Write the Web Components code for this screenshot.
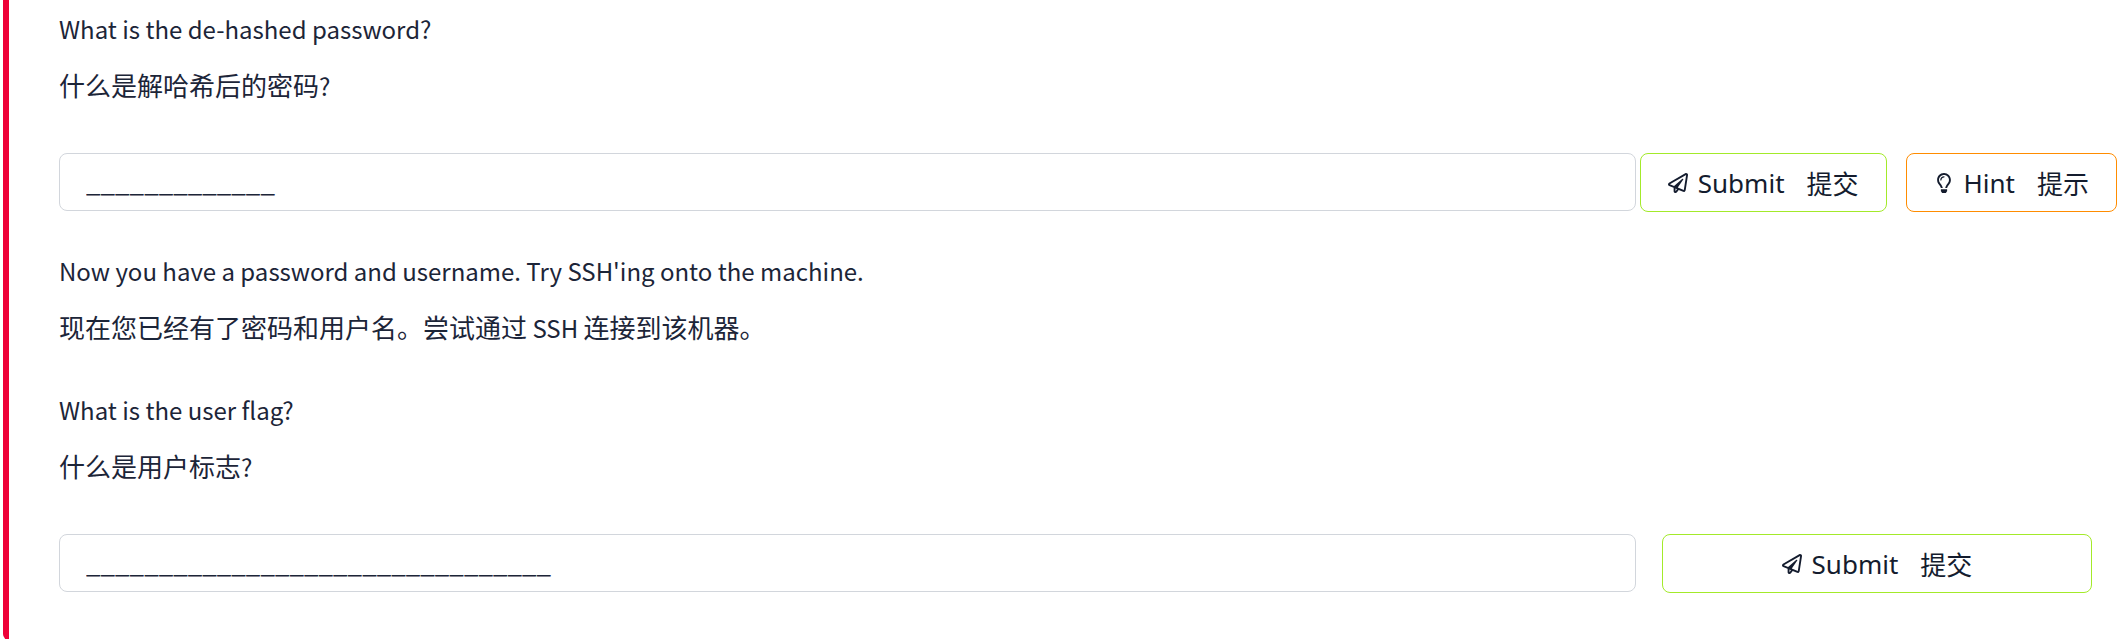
<!DOCTYPE html>
<html lang="en">
<head>
<meta charset="utf-8">
<meta name="viewport" content="width=device-width, initial-scale=1">
<title>Room questions</title>
<style>
  body { margin: 0; background: #fff; color: #1c2538; font-family: "Noto Sans CJK SC", "Noto Sans", sans-serif; }
  small { font-size: 24px; }
</style>
</head>
<body>
<task-card>
  <bilingual-text>
    What is the de-hashed password?
    <span slot="zh" lang="zh-CN">什么是解哈希后的密码<small>?</small></span>
  </bilingual-text>
  <answer-row wide length="13" label="What is the de-hashed password?">
    <action-button kind="submit">Submit<span slot="zh" lang="zh-CN">提交</span></action-button>
    <action-button kind="hint">Hint<span slot="zh" lang="zh-CN">提示</span></action-button>
  </answer-row>
  <bilingual-text>
    Now you have a password and username. Try SSH'ing onto the machine.
    <span slot="zh" lang="zh-CN">现在您已经有了密码和用户名。尝试通过<small> SSH </small>连接到该机器。</span>
  </bilingual-text>
  <bilingual-text>
    What is the user flag?
    <span slot="zh" lang="zh-CN">什么是用户标志<small>?</small></span>
  </bilingual-text>
  <answer-row length="32" label="What is the user flag?">
    <action-button kind="submit">Submit<span slot="zh" lang="zh-CN">提交</span></action-button>
  </answer-row>
</task-card>

<script>
class TaskCard extends HTMLElement {
  constructor() {
    super();
    this.attachShadow({ mode: 'open' }).innerHTML = `
      <style>
        :host { display: block; margin-left: 3px; border-left: 6px solid #ee0038; border-bottom-left-radius: 6px; }
        section { padding: 1px 36px 16px 50px; }
      </style>
      <section><slot></slot></section>`;
  }
}

class BilingualText extends HTMLElement {
  constructor() {
    super();
    this.attachShadow({ mode: 'open' }).innerHTML = `
      <style>
        :host { display: block; padding-bottom: 26px; }
        p { margin: 0; line-height: 56px; }
        .en { font-size: 24px; }
        .zh { font-size: 26px; }
        ::slotted(span) { display: block; }
      </style>
      <p class="en"><slot></slot></p>
      <p class="zh"><slot name="zh"></slot></p>`;
  }
}

class AnswerRow extends HTMLElement {
  constructor() {
    super();
    this.attachShadow({ mode: 'open' }).innerHTML = `
      <style>
        :host { display: block; padding: 13px 0 31px; }
        form { display: grid; grid-template-columns: 11fr 3fr; column-gap: 26px; align-items: start; margin: 0; }
        input { box-sizing: border-box; width: 100%; height: 58px; margin: 0; padding: 0 26px 4px; border: 1px solid #d2d6dc;
          border-radius: 8px; background: #fff; color: inherit; font: 26px "Noto Sans CJK SC", sans-serif; outline: none; }
        input::placeholder { color: #1c2538; opacity: 1; }
        .actions { display: grid; }
        :host([wide]) .actions { display: flex; justify-content: flex-end; gap: 19px; margin: 0 -25px; }
      </style>
      <form>
        <input type="text" autocomplete="off">
        <div class="actions"><slot></slot></div>
      </form>`;
  }
  connectedCallback() {
    const input = this.shadowRoot.querySelector('input');
    input.placeholder = '_'.repeat(Number(this.getAttribute('length')));
    input.setAttribute('aria-label', this.getAttribute('label'));
    this.shadowRoot.querySelector('form').addEventListener('submit', e => e.preventDefault());
  }
}

const ICONS = {
  submit: `<svg width="20" height="20" viewBox="0 0 512 512" fill="currentColor" aria-hidden="true">
      <path d="M440 6.5L24 246.4c-34.4 19.9-31.1 70.8 5.7 85.9L144 379.6V464c0 46.4 59.2 65.5 86.6 28.6l43.8-59.1 111.9 46.2c5.9 2.4 12.1 3.6 18.3 3.6 8.2 0 16.3-2.1 23.6-6.2 12.8-7.2 21.6-20 23.9-34.5l59.4-387.2c6.1-40.1-36.9-68.8-71.5-48.9zM192 464v-64.6l36.6 15.1L192 464zm212.6-28.7l-153.8-63.5L391 169.5c10.7-15.5-9.5-33.5-23.7-21.2L155.8 332.6 48 288 464 48l-59.4 387.3z"/></svg>`,
  hint: `<svg width="20" height="20" viewBox="0 0 352 512" fill="currentColor" aria-hidden="true">
      <path d="M176 80c-52.94 0-96 43.06-96 96 0 8.84 7.16 16 16 16s16-7.16 16-16c0-35.3 28.72-64 64-64 8.84 0 16-7.16 16-16s-7.16-16-16-16zM96.06 459.17c0 3.15.93 6.22 2.68 8.84l24.51 36.84c2.97 4.46 7.97 7.14 13.32 7.14h78.85c5.36 0 10.36-2.68 13.32-7.14l24.51-36.84c1.74-2.62 2.67-5.7 2.68-8.84l.05-43.18H96.02l.04 43.18zM176 0C73.72 0 0 82.97 0 176c0 44.37 16.45 84.85 43.56 115.78 16.64 18.99 42.74 58.8 52.42 92.16v.06h48v-.12c-.01-4.77-.72-9.51-2.15-14.07-5.59-17.81-22.82-64.71-62.17-109.54-20.53-23.43-31.52-53.15-31.61-84.14-.2-73.64 59.67-128 127.95-128 70.58 0 128 57.42 128 128 0 30.97-11.24 60.85-31.65 84.14-39.11 44.61-56.42 91.47-62.1 109.46a47.507 47.507 0 0 0-2.22 14.3v.1h48v-.05c9.68-33.37 35.78-73.18 52.42-92.16C335.55 260.85 352 220.37 352 176 352 78.8 273.2 0 176 0z"/></svg>`
};

class ActionButton extends HTMLElement {
  constructor() {
    super();
    this.attachShadow({ mode: 'open' }).innerHTML = `
      <style>
        :host { display: block; --edge: #a3ea2a; }
        :host([kind="hint"]) { --edge: #ff8c00; }
        button { box-sizing: border-box; display: flex; align-items: center; justify-content: center; width: 100%; height: 59px;
          margin: 0; padding: 0 27px; border: 1px solid var(--edge); border-radius: 8px; background: #fff; color: #141c2e;
          font: 26px/36px "Noto Sans", "Noto Sans CJK SC", sans-serif; cursor: pointer; white-space: nowrap; }
        .icon { display: flex; margin-right: 10px; }
        .zh { margin-left: 22px; font-family: "Noto Sans CJK SC", sans-serif; }
      </style>
      <button><span class="icon"></span><span><slot></slot></span><span class="zh"><slot name="zh"></slot></span></button>`;
  }
  connectedCallback() {
    const kind = this.getAttribute('kind');
    this.shadowRoot.querySelector('button').type = kind === 'submit' ? 'submit' : 'button';
    this.shadowRoot.querySelector('.icon').innerHTML = ICONS[kind];
  }
}

customElements.define('task-card', TaskCard);
customElements.define('bilingual-text', BilingualText);
customElements.define('answer-row', AnswerRow);
customElements.define('action-button', ActionButton);
</script>
</body>
</html>
